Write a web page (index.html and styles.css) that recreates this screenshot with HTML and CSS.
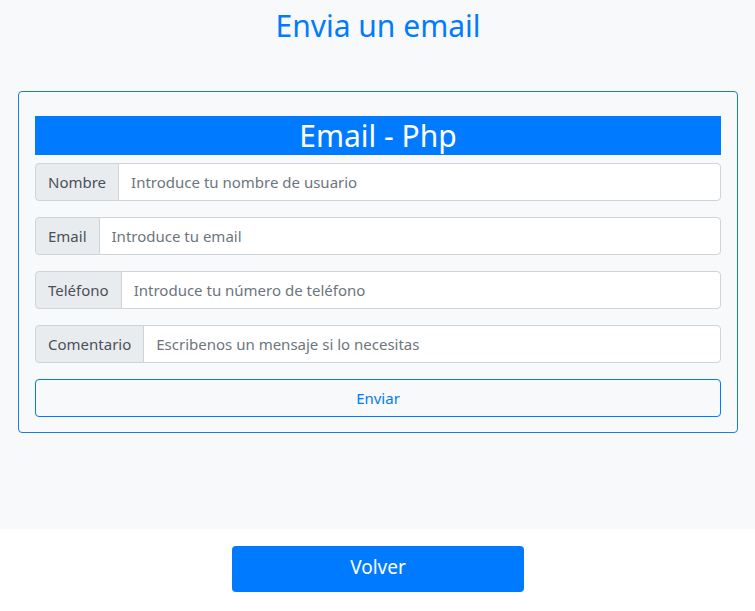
FILE: index.html
```html
<!DOCTYPE html>
<html lang="es">
<head>
<meta charset="utf-8">
<title>Envia un email</title>
<link rel="stylesheet" href="styles.css">
</head>
<body>
<section class="hero">
  <h1 class="title">Envia un email</h1>
  <form class="card">
    <h2 class="card-head">Email - Php</h2>
    <div class="group">
      <span class="addon">Nombre</span>
      <input class="field" type="text" placeholder="Introduce tu nombre de usuario">
    </div>
    <div class="group">
      <span class="addon">Email</span>
      <input class="field" type="email" placeholder="Introduce tu email">
    </div>
    <div class="group">
      <span class="addon">Teléfono</span>
      <input class="field" type="text" placeholder="Introduce tu número de teléfono">
    </div>
    <div class="group">
      <span class="addon">Comentario</span>
      <input class="field" type="text" placeholder="Escribenos un mensaje si lo necesitas">
    </div>
    <button class="btn-outline" type="button">Enviar</button>
  </form>
</section>
<div class="footer">
  <button class="btn-primary" type="button">Volver</button>
</div>
</body>
</html>
```
FILE: styles.css
```css
* { box-sizing: border-box; }
html, body { margin: 0; padding: 0; background: #fff; }
body {
  font-family: "Noto Sans", "Open Sans", sans-serif;
  font-size: 15px;
  color: #212529;
}
.hero {
  background: #f8f9fa;
  padding: 6px 17px 96px 18px;
}
.title {
  margin: 0 0 45px;
  text-align: center;
  color: #007bff;
  font-weight: 400;
  font-size: 30px;
  line-height: 40px;
}
.card {
  margin: 0;
  border: 1px solid #1a7fd4;
  border-radius: 4px;
  padding: 24px 16px 15px;
  display: flex;
  flex-direction: column;
  gap: 16px;
}
.card-head {
  margin: 0 0 -8px;
  background: #007bff;
  color: #fff;
  text-align: center;
  font-weight: 400;
  font-size: 30px;
  line-height: 39px;
  height: 39px;
}
.group {
  display: flex;
  height: 38px;
}
.addon {
  display: flex;
  align-items: center;
  padding: 0 12px;
  background: #e9ecef;
  border: 1px solid #ced4da;
  border-radius: 4px 0 0 4px;
  color: #495057;
  white-space: nowrap;
}
.field {
  flex: 1;
  min-width: 0;
  margin-left: -1px;
  border: 1px solid #ced4da;
  border-radius: 0 4px 4px 0;
  background: #fff;
  padding: 0 12px;
  font: inherit;
  color: #495057;
}
.field::placeholder { color: #6c757d; opacity: 1; }
.btn-outline {
  height: 38px;
  border: 1px solid #007bff;
  border-radius: 4px;
  background: transparent;
  color: #007bff;
  font: inherit;
}
.footer {
  display: flex;
  justify-content: center;
  padding: 17px 0 0;
}
.btn-primary {
  width: 292px;
  height: 46px;
  margin-left: 1px;
  padding: 0 0 4px;
  border: 0;
  border-radius: 4px;
  background: #007bff;
  color: #fff;
  font-family: inherit;
  font-size: 19px;
}
```
